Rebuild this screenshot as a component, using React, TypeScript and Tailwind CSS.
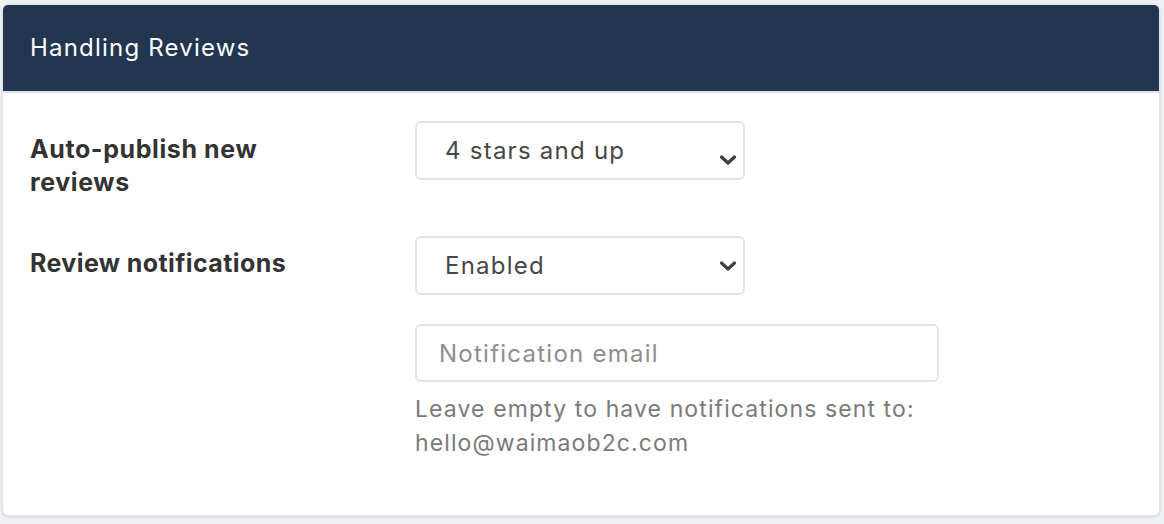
import React from 'react';

function Chevron() {
  return (
    <svg
      className="pointer-events-none absolute right-[8px] top-1/2 -translate-y-1/2"
      width="18"
      height="12"
      viewBox="0 0 18 12"
      fill="none"
    >
      <path d="M2.5 3 9 9l6.5-6" stroke="#3d3d3d" strokeWidth="3.2" strokeLinecap="round" strokeLinejoin="round" />
    </svg>
  );
}

function SelectBox({ value, options }: { value: string; options: string[] }) {
  return (
    <div className="relative w-[330px]">
      <select
        defaultValue={value}
        className="h-[59px] w-full appearance-none rounded-[6px] border-2 border-[#e3e3e3] bg-white pl-[28px] pr-[40px] text-[24px] tracking-[1.25px] text-[#474747] outline-none"
      >
        {options.map((o) => (
          <option key={o}>{o}</option>
        ))}
      </select>
      <Chevron />
    </div>
  );
}

export default function App() {
  return (
    <div className="h-[524px] bg-[#eef0f4] pl-[2px] pr-[4px] pt-[4px] font-['Inter',sans-serif]">
      <div className="h-[512px] overflow-hidden rounded-[6px] border border-[#e2e4e8] bg-white shadow-sm">
        <div className="flex h-[88px] items-center border-b-2 border-[#dde1e6] bg-[#22364f] px-[27px]">
          <h2 className="text-[24px] tracking-[1.2px] text-white">Handling Reviews</h2>
        </div>
        <div className="grid grid-cols-[385px_1fr] gap-y-[37px] px-[27px] pt-[28px]">
          <div className="pt-[12px] text-[25px] font-bold leading-[33px] tracking-[0.6px] text-[#333]">
            Auto-publish new
            <br />
            reviews
          </div>
          <SelectBox value="4 stars and up" options={['All reviews', '3 stars and up', '4 stars and up', '5 stars only', 'Never']} />

          <div className="pt-[11px] text-[25px] font-bold leading-[33px] tracking-[0.4px] text-[#333]">
            Review notifications
          </div>
          <div className="flex flex-col">
            <SelectBox value="Enabled" options={['Enabled', 'Disabled']} />
            <input
              type="email"
              placeholder="Notification email"
              className="mt-[29px] h-[58px] w-[524px] rounded-[6px] border-2 border-[#e3e3e3] px-[22px] text-[24px] tracking-[1.25px] text-[#474747] outline-none placeholder:text-[#8e8e8e]"
            />
            <p className="mt-[10px] text-[23px] leading-[34px] tracking-[1.1px] text-[#7a7a7a]">
              Leave empty to have notifications sent to:
              <br />
              hello@waimaob2c.com
            </p>
          </div>
        </div>
      </div>
    </div>
  );
}
